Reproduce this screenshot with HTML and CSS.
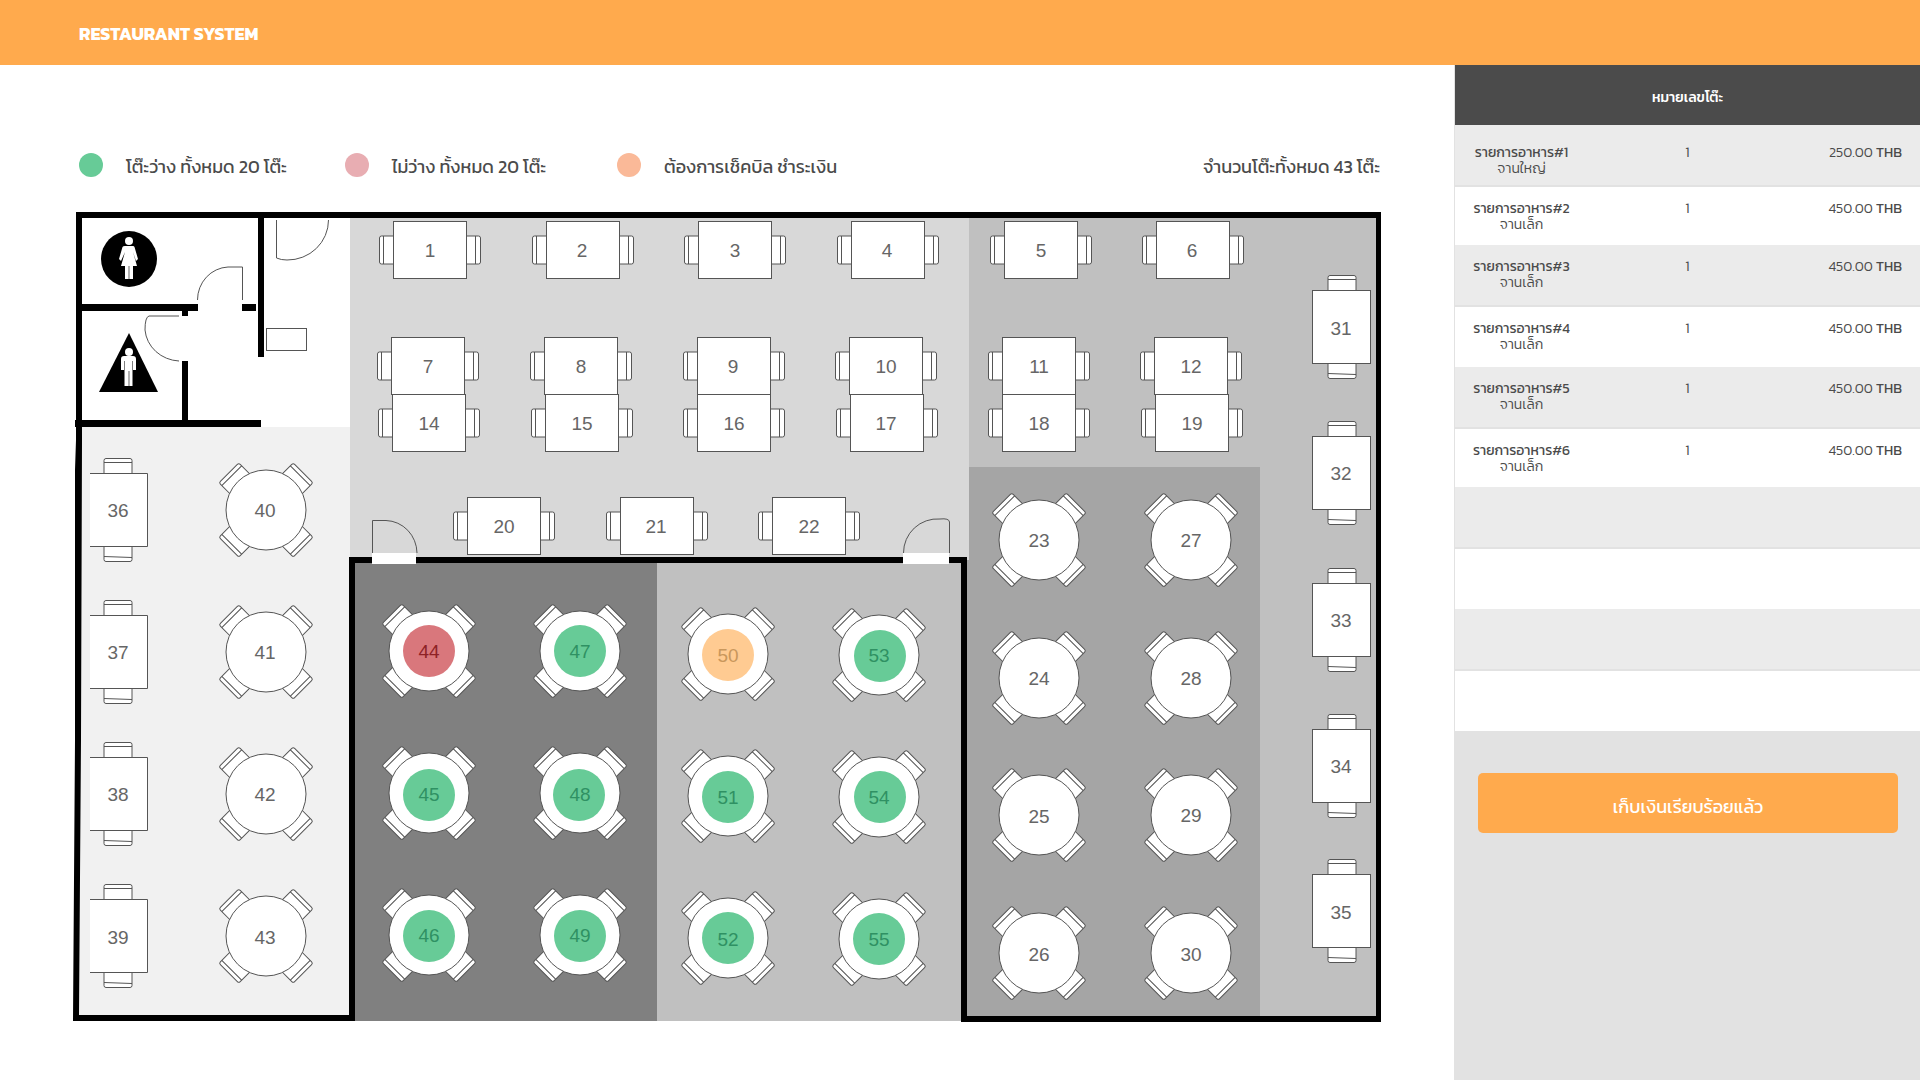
FILE: index.html
```html
<!DOCTYPE html>
<html lang="th">
<head>
<meta charset="utf-8">
<meta name="viewport" content="width=device-width, initial-scale=1">
<title>Restaurant System</title>
<link rel="stylesheet" href="styles.css">
</head>
<body>
<header class="topbar"><h1 class="brand">RESTAURANT SYSTEM</h1></header>
<div class="layout">
<main class="floor">
  <ul class="legend">
    <li class="legend-item"><span class="dot dot-free"></span><span class="legend-text">โต๊ะว่าง ทั้งหมด 20 โต๊ะ</span></li>
    <li class="legend-item"><span class="dot dot-busy"></span><span class="legend-text">ไม่ว่าง ทั้งหมด 20 โต๊ะ</span></li>
    <li class="legend-item"><span class="dot dot-bill"></span><span class="legend-text">ต้องการเช็คบิล ชำระเงิน</span></li>
    <li class="legend-text">จำนวนโต๊ะทั้งหมด 43 โต๊ะ</li>
  </ul>
  <svg class="plan" viewBox="72 208 1312 818" role="img" aria-label="แผนผังโต๊ะ">
    <defs>
      <g id="seat" class="line">
        <path d="M-14 -37V-50.500Q-14 -52.500 -12 -52.500H12Q14 -52.500 14 -50.500V-37ZM-14 -48.500H14"/>
      </g>
      <g id="wide" class="line">
        <rect x="-50.500" y="-14" width="20" height="28" rx="2"/><path d="M-46.500 -14V14"/>
        <rect x="30.500" y="-14" width="20" height="28" rx="2"/><path d="M45.500 -14V14"/>
        <rect x="-36.500" y="-28.500" width="73" height="57"/>
      </g>
      <g id="tall" class="line">
        <rect x="-14" y="-51.500" width="28" height="20" rx="2"/><path d="M-14 -47.500H14"/>
        <rect x="-14" y="31.500" width="28" height="20" rx="2"/><path d="M-14 46.500L14 47.500"/>
        <rect x="-29.500" y="-36.500" width="58" height="73"/>
      </g>
      <g id="side" class="line">
        <rect x="-14" y="-51.500" width="28" height="20" rx="2"/><path d="M-14 -47.500H14"/>
        <rect x="-14" y="31.500" width="28" height="20" rx="2"/><path d="M-14 46.500L14 47.500"/>
        <path d="M-28 -36.500H29.500V36.500H-28"/>
      </g>
      <g id="round">
        <use href="#seat" transform="rotate(45)"/><use href="#seat" transform="rotate(135)"/>
        <use href="#seat" transform="rotate(225)"/><use href="#seat" transform="rotate(315)"/>
        <circle class="line" r="40"/>
      </g>
    </defs>

    <!-- zones -->
    <rect fill="#d8d8d8" x="350" y="214" width="619" height="346"/>
    <rect fill="#c0c0c0" x="969" y="214" width="408" height="804"/>
    <path fill="#a5a5a5" d="M969 467H1260V1018H964V560H969Z"/>
    <path fill="#f1f1f1" d="M80 427H350V1016H77Z"/>
    <rect fill="#808080" x="353" y="560" width="304" height="461"/>
    <rect fill="#c0c0c0" x="657" y="560" width="306" height="461"/>

    <!-- walls -->
    <path d="M76 212H1381V1022H961V563H355V1021H73L75 740V470L76 440ZM82 218V440L81 740L79 1015H349V557H967V1016H1376V218Z" fill-rule="evenodd"/>
    <path d="M258 217H264V357H258ZM76 304H198V311H188V316H182V311H76ZM242 304H256V311H242ZM182 361H188V420H261V427H75V420H182Z"/>
    <path fill="#fff" d="M372 553H416V564H372ZM903 553H949V564H903Z"/>

    <!-- doors and counter -->
    <g class="door">
      <path d="M276.500 220V258Q281 260 287 260A41 40 0 0 0 328.500 220"/>
      <path d="M197.500 300A32 33 0 0 1 228 267H242.500V300"/>
      <path d="M179 316H149Q145 317 145 330A36 34 0 0 0 179 361"/>
      <path d="M372.500 553V520.500H386A32 33 0 0 1 417 553"/>
      <path d="M903.500 553A34 34 0 0 1 940 519Q949 518 949.500 522V553"/>
      <rect x="266.500" y="328.500" width="40" height="22"/>
    </g>

    <!-- washrooms -->
    <circle cx="129" cy="259" r="28"/>
    <path d="M129 333L158 392H99Z"/>
    <g fill="#fff">
      <circle cx="129" cy="241" r="4"/>
      <path d="M125 246H133Q134 246 134.500 247L138 259L136 261L133 252L137 266H133V279H129.300V266H128.700V279H125V266H121L125 252L121 261L119 259L122.500 247Q123 246 125 246Z"/>
      <circle cx="129" cy="352" r="4"/>
      <path d="M124 356H133Q136 356 136 359V370H133V361H132.500V386H129.300V371H128.700V386H124.500V361H124V370H121V359Q121 356 124 356Z"/>
    </g>

    <!-- tables -->
    <use href="#wide" x="430" y="250"/><use href="#wide" x="583" y="250"/><use href="#wide" x="735" y="250"/>
    <use href="#wide" x="888" y="250"/><use href="#wide" x="1041" y="250"/><use href="#wide" x="1193" y="250"/>
    <use href="#wide" x="428" y="366"/><use href="#wide" x="581" y="366"/><use href="#wide" x="734" y="366"/>
    <use href="#wide" x="886" y="366"/><use href="#wide" x="1039" y="366"/><use href="#wide" x="1191" y="366"/>
    <use href="#wide" x="429" y="423"/><use href="#wide" x="582" y="423"/><use href="#wide" x="734" y="423"/>
    <use href="#wide" x="887" y="423"/><use href="#wide" x="1039" y="423"/><use href="#wide" x="1192" y="423"/>
    <use href="#wide" x="504" y="526"/><use href="#wide" x="657" y="526"/><use href="#wide" x="809" y="526"/>
    <use href="#tall" x="1342" y="327"/><use href="#tall" x="1342" y="473"/><use href="#tall" x="1342" y="620"/>
    <use href="#tall" x="1342" y="766"/><use href="#tall" x="1342" y="911"/>
    <use href="#side" x="118" y="510"/><use href="#side" x="118" y="652"/><use href="#side" x="118" y="794"/><use href="#side" x="118" y="936"/>
    <use href="#round" x="266" y="510"/><use href="#round" x="266" y="652"/><use href="#round" x="266" y="794"/><use href="#round" x="266" y="936"/>
    <use href="#round" x="1039" y="540"/><use href="#round" x="1039" y="678"/><use href="#round" x="1039" y="815"/><use href="#round" x="1039" y="953"/>
    <use href="#round" x="1191" y="540"/><use href="#round" x="1191" y="678"/><use href="#round" x="1191" y="815"/><use href="#round" x="1191" y="953"/>
    <use href="#round" x="429" y="651"/><use href="#round" x="429" y="793"/><use href="#round" x="429" y="935"/>
    <use href="#round" x="580" y="651"/><use href="#round" x="580" y="793"/><use href="#round" x="580" y="935"/>
    <use href="#round" x="728" y="654"/><use href="#round" x="728" y="796"/><use href="#round" x="728" y="938"/>
    <use href="#round" x="879" y="655"/><use href="#round" x="879" y="797"/><use href="#round" x="879" y="939"/>

    <!-- table status -->
    <circle class="busy" cx="429" cy="651" r="26"/>
    <circle class="bill" cx="728" cy="655" r="26"/>
    <g class="free">
      <circle cx="429" cy="795" r="26"/><circle cx="429" cy="936" r="26"/>
      <circle cx="580" cy="651" r="26"/><circle cx="579" cy="795" r="26"/><circle cx="580" cy="936" r="26"/>
      <circle cx="728" cy="797" r="26"/><circle cx="728" cy="938" r="26"/>
      <circle cx="880" cy="656" r="26"/><circle cx="880" cy="797" r="26"/><circle cx="879" cy="939" r="26"/>
    </g>

    <!-- table numbers -->
    <g class="num">
      <text x="430" y="257">1</text><text x="582" y="257">2</text><text x="735" y="257">3</text><text x="887" y="257">4</text><text x="1041" y="257">5</text><text x="1192" y="257">6</text>
      <text x="428" y="373">7</text><text x="581" y="373">8</text><text x="733" y="373">9</text><text x="886" y="373">10</text><text x="1039" y="373">11</text><text x="1191" y="373">12</text>
      <text x="429" y="430">14</text><text x="582" y="430">15</text><text x="734" y="430">16</text><text x="886" y="430">17</text><text x="1039" y="430">18</text><text x="1192" y="430">19</text>
      <text x="504" y="533">20</text><text x="656" y="533">21</text><text x="809" y="533">22</text>
      <text x="1039" y="547">23</text><text x="1039" y="685">24</text><text x="1039" y="823">25</text><text x="1039" y="961">26</text>
      <text x="1191" y="547">27</text><text x="1191" y="685">28</text><text x="1191" y="822">29</text><text x="1191" y="961">30</text>
      <text x="1341" y="335">31</text><text x="1341" y="480">32</text><text x="1341" y="627">33</text><text x="1341" y="773">34</text><text x="1341" y="919">35</text>
      <text x="118" y="517">36</text><text x="118" y="659">37</text><text x="118" y="801">38</text><text x="118" y="944">39</text>
      <text x="265" y="517">40</text><text x="265" y="659">41</text><text x="265" y="801">42</text><text x="265" y="944">43</text>
      <text class="on-busy" x="429" y="658">44</text>
      <text class="on-bill" x="728" y="662">50</text>
      <g class="on-free">
        <text x="429" y="801">45</text><text x="429" y="942">46</text>
        <text x="580" y="658">47</text><text x="580" y="801">48</text><text x="580" y="942">49</text>
        <text x="728" y="804">51</text><text x="728" y="946">52</text>
        <text x="879" y="662">53</text><text x="879" y="804">54</text><text x="879" y="946">55</text>
      </g>
    </g>
  </svg>
</main>
<aside class="order">
  <table class="bill-table">
    <thead><tr><th colspan="3" scope="colgroup">หมายเลขโต๊ะ</th></tr></thead>
    <tbody>
      <tr><td><strong>รายการอาหาร#1</strong><br>จานใหญ่</td><td>1</td><td>250.00 <strong>THB</strong></td></tr>
      <tr><td><strong>รายการอาหาร#2</strong><br>จานเล็ก</td><td>1</td><td>450.00 <strong>THB</strong></td></tr>
      <tr><td><strong>รายการอาหาร#3</strong><br>จานเล็ก</td><td>1</td><td>450.00 <strong>THB</strong></td></tr>
      <tr><td><strong>รายการอาหาร#4</strong><br>จานเล็ก</td><td>1</td><td>450.00 <strong>THB</strong></td></tr>
      <tr><td><strong>รายการอาหาร#5</strong><br>จานเล็ก</td><td>1</td><td>450.00 <strong>THB</strong></td></tr>
      <tr><td><strong>รายการอาหาร#6</strong><br>จานเล็ก</td><td>1</td><td>450.00 <strong>THB</strong></td></tr>
      <tr><td></td><td></td><td></td></tr>
      <tr><td></td><td></td><td></td></tr>
      <tr class="shade"><td></td><td></td><td></td></tr>
      <tr><td></td><td></td><td></td></tr>
    </tbody>
  </table>
  <button class="pay" type="button">เก็บเงินเรียบร้อยแล้ว</button>
</aside>
</div>
</body>
</html>
```
FILE: styles.css
```css
* { box-sizing: border-box; }

body {
  margin: 0;
  min-height: 100vh;
  display: flex;
  flex-direction: column;
  background: #fff;
  color: #4b4b4b;
  font-family: Kanit, Prompt, "Noto Sans", "Noto Sans Thai", sans-serif;
  font-size: 18px;
}

.topbar {
  display: flex;
  align-items: center;
  height: 65px;
  padding: 2px 79px 0;
  background: #ffaa4d;
}

.brand {
  margin: 0;
  color: #fff;
  font-size: 18px;
  font-weight: 700;
  line-height: 24px;
}

.layout {
  flex: 1;
  display: grid;
  grid-template-columns: minmax(0, 1fr) 466px;
}

.floor { padding: 88px 70px 48px 72px; }

.legend {
  display: grid;
  grid-template-columns: 266px 272px 1fr auto;
  margin: 0 0 29px;
  padding: 0 4px 0 7px;
  list-style: none;
  line-height: 24px;
  white-space: nowrap;
}

.legend-item {
  display: flex;
  gap: 23px;
}

.legend-text { padding-top: 2px; }

.dot {
  width: 24px;
  height: 24px;
  border-radius: 50%;
}

.dot-free { background: #67cb97; }
.dot-busy { background: #e8adb2; }
.dot-bill { background: #fab998; }

.plan {
  display: block;
  width: 100%;
  height: auto;
}

.line {
  fill: #fff;
  stroke: #555;
  stroke-width: 1px;
}

.door {
  fill: none;
  stroke: #555;
  stroke-width: 1px;
}

.free { fill: #67cb97; }
.busy { fill: #d9777c; }
.bill { fill: #ffcb92; }

.num {
  fill: #666;
  font-family: "Liberation Sans", Arial, sans-serif;
  font-size: 19px;
  text-anchor: middle;
}

.on-free { fill: #2f9163; }
.on-busy { fill: #8e2226; }
.on-bill { fill: #c9975c; }

.order {
  border-left: 1px solid #e2e2e2;
  background: #e2e2e2;
}

.bill-table {
  width: 100%;
  table-layout: fixed;
  border-collapse: separate;
  border-spacing: 0;
  font-size: 14px;
  font-weight: 300;
  line-height: 16px;
}

.bill-table th {
  height: 60px;
  padding: 6px 0 0;
  background: #4b4b4b;
  color: #fff;
  font-weight: 500;
}

.bill-table td {
  height: 60px;
  padding: 14px 18px 0;
  background: #fff;
  text-align: center;
  vertical-align: top;
  white-space: nowrap;
}

.bill-table tr:nth-child(4n + 2):not(:last-child) td { height: 58px; }
.bill-table tbody tr:nth-child(odd) td {
  height: 62px;
  border-bottom: 2px solid #e2e2e2;
  background: #ebebeb;
}
.bill-table td:first-child { padding-left: 0; padding-right: 22px; }
.bill-table tbody tr:first-child td { padding-top: 20px; }
.bill-table tbody .shade td { background: #e2e2e2; }
.bill-table td:last-child { text-align: right; }
.bill-table strong { font-weight: 400; }

.pay {
  display: block;
  width: calc(100% - 45px);
  height: 60px;
  margin: 42px 22px 0 23px;
  padding: 7px 0 0;
  border: 0;
  border-radius: 5px;
  background: #ffaa4d;
  color: #fff;
  font: inherit;
}
```
